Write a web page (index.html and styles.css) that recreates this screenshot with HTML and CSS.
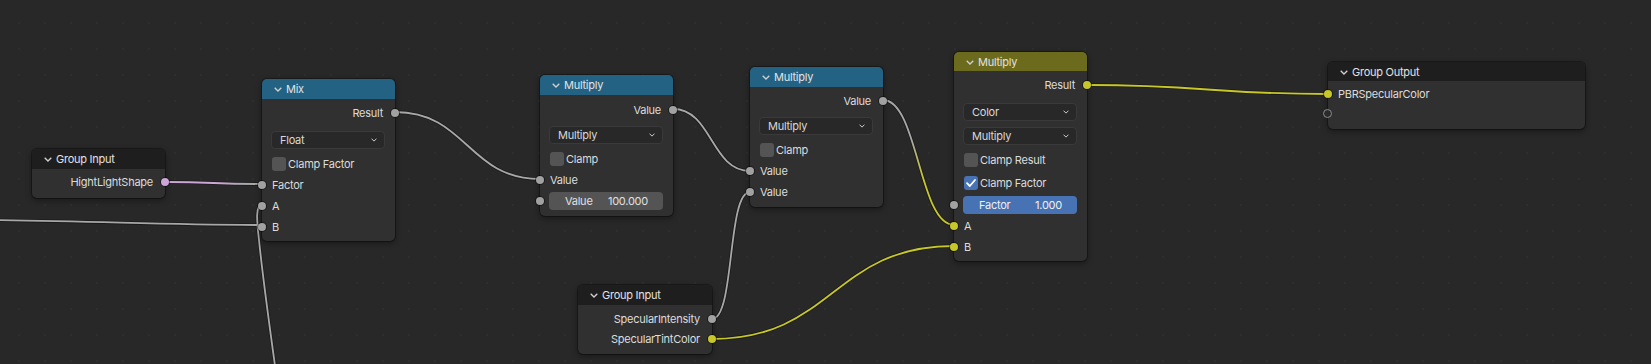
FILE: index.html
```html
<!DOCTYPE html>
<html lang="en">
<head>
    <meta charset="UTF-8">
    <meta name="viewport" content="width=device-width, initial-scale=1.0">
    <title>Node Editor</title>
    <link rel="stylesheet" href="styles.css">
</head>
<body>
    <div class="canvas">
        <svg class="wires" width="1651" height="364" viewBox="0 0 1651 364">
            <defs>
                <linearGradient id="pinkGray" gradientUnits="userSpaceOnUse" x1="165" y1="0" x2="262" y2="0">
                    <stop offset="0.55" stop-color="#cca6d6"/>
                    <stop offset="0.85" stop-color="#a8a8a8"/>
                </linearGradient>
                <linearGradient id="grayYellow" gradientUnits="userSpaceOnUse" x1="0" y1="100" x2="0" y2="225">
                    <stop offset="0.3" stop-color="#a8a8a8"/>
                    <stop offset="0.65" stop-color="#c7c729"/>
                </linearGradient>
            </defs>
            <g class="shade">
                <path d="M -20 220 C 100 221, 160 225, 262 225"/>
                <path d="M 262 205 C 255 205, 257 222, 259 240 C 262 270, 270 330, 277 380"/>
                <path d="M 165 182 C 215 182, 212 184, 262 184"/>
                <path d="M 395 112 C 467 112, 468 179, 540 179"/>
                <path d="M 673 109 C 712 109, 711 171, 750 171"/>
                <path d="M 712 319 C 735 319, 727 192, 750 192"/>
                <path d="M 883 100 C 918 100, 919 225, 954 225"/>
                <path d="M 712 339 C 833 339, 833 246, 954 246"/>
                <path d="M 1087 85 C 1207 85, 1208 94, 1328 94"/>
            </g>
            <g class="wire">
                <path class="gray" d="M -20 220 C 100 221, 160 225, 262 225"/>
                <path class="gray" d="M 262 205 C 255 205, 257 222, 259 240 C 262 270, 270 330, 277 380"/>
                <path stroke="url(#pinkGray)" d="M 165 182 C 215 182, 212 184, 262 184"/>
                <path class="gray" d="M 395 112 C 467 112, 468 179, 540 179"/>
                <path class="gray" d="M 673 109 C 712 109, 711 171, 750 171"/>
                <path class="gray" d="M 712 319 C 735 319, 727 192, 750 192"/>
                <path stroke="url(#grayYellow)" d="M 883 100 C 918 100, 919 225, 954 225"/>
                <path class="yellow" d="M 712 339 C 833 339, 833 246, 954 246"/>
                <path class="yellow" d="M 1087 85 C 1207 85, 1208 94, 1328 94"/>
            </g>
        </svg>

        <!-- Group Input (left) -->
        <div class="node io n-gin1">
            <div class="head dark">
                <svg class="chev" viewBox="0 0 8 5"><polyline points="0.7,0.7 4,4 7.3,0.7"/></svg>
                <span>Group Input</span>
            </div>
            <div class="body">
                <div class="row out">HightLightShape<i class="sock r pink"></i></div>
            </div>
        </div>

        <!-- Mix -->
        <div class="node n-mix">
            <div class="head blue">
                <svg class="chev" viewBox="0 0 8 5"><polyline points="0.7,0.7 4,4 7.3,0.7"/></svg>
                <span>Mix</span>
            </div>
            <div class="body">
                <div class="row out">Result<i class="sock r gray"></i></div>
                <div class="select mt8">Float<svg class="dd" viewBox="0 0 8 5"><polyline points="0.7,0.7 4,4 7.3,0.7"/></svg></div>
                <div class="row mt4"><span class="check"></span>Clamp Factor</div>
                <div class="row">Factor<i class="sock l gray"></i></div>
                <div class="row">A<i class="sock l gray"></i></div>
                <div class="row">B<i class="sock l gray"></i></div>
            </div>
        </div>

        <!-- Multiply (math 1) -->
        <div class="node n-mul1">
            <div class="head blue">
                <svg class="chev" viewBox="0 0 8 5"><polyline points="0.7,0.7 4,4 7.3,0.7"/></svg>
                <span>Multiply</span>
            </div>
            <div class="body">
                <div class="row out">Value<i class="sock r gray"></i></div>
                <div class="select mt6">Multiply<svg class="dd" viewBox="0 0 8 5"><polyline points="0.7,0.7 4,4 7.3,0.7"/></svg></div>
                <div class="row mt4"><span class="check"></span>Clamp</div>
                <div class="row">Value<i class="sock l gray"></i></div>
                <div class="row">
                    <div class="num"><span>Value</span><span>100.000</span></div>
                    <i class="sock l gray"></i>
                </div>
            </div>
        </div>

        <!-- Multiply (math 2) -->
        <div class="node n-mul2">
            <div class="head blue">
                <svg class="chev" viewBox="0 0 8 5"><polyline points="0.7,0.7 4,4 7.3,0.7"/></svg>
                <span>Multiply</span>
            </div>
            <div class="body">
                <div class="row out">Value<i class="sock r gray"></i></div>
                <div class="select mt6">Multiply<svg class="dd" viewBox="0 0 8 5"><polyline points="0.7,0.7 4,4 7.3,0.7"/></svg></div>
                <div class="row mt4"><span class="check"></span>Clamp</div>
                <div class="row">Value<i class="sock l gray"></i></div>
                <div class="row">Value<i class="sock l gray"></i></div>
            </div>
        </div>

        <!-- Multiply (mix color) -->
        <div class="node n-mul3">
            <div class="head olive">
                <svg class="chev" viewBox="0 0 8 5"><polyline points="0.7,0.7 4,4 7.3,0.7"/></svg>
                <span>Multiply</span>
            </div>
            <div class="body">
                <div class="row out">Result<i class="sock r yellow"></i></div>
                <div class="select mt8">Color<svg class="dd" viewBox="0 0 8 5"><polyline points="0.7,0.7 4,4 7.3,0.7"/></svg></div>
                <div class="select mt6">Multiply<svg class="dd" viewBox="0 0 8 5"><polyline points="0.7,0.7 4,4 7.3,0.7"/></svg></div>
                <div class="row mt4"><span class="check"></span>Clamp Result</div>
                <div class="row mt2"><span class="check on"><svg viewBox="0 0 14 14"><polyline points="3,7.2 5.8,10 11,4"/></svg></span>Clamp Factor</div>
                <div class="row mt1">
                    <div class="num blue-field"><span>Factor</span><span>1.000</span></div>
                    <i class="sock l gray"></i>
                </div>
                <div class="row">A<i class="sock l yellow"></i></div>
                <div class="row">B<i class="sock l yellow"></i></div>
            </div>
        </div>

        <!-- Group Output -->
        <div class="node io n-gout">
            <div class="head dark">
                <svg class="chev" viewBox="0 0 8 5"><polyline points="0.7,0.7 4,4 7.3,0.7"/></svg>
                <span>Group Output</span>
            </div>
            <div class="body">
                <div class="row">PBRSpecularColor<i class="sock l yellow"></i></div>
                <div class="row"><i class="sock l empty"></i></div>
            </div>
        </div>

        <!-- Group Input (bottom) -->
        <div class="node io n-gin2">
            <div class="head dark">
                <svg class="chev" viewBox="0 0 8 5"><polyline points="0.7,0.7 4,4 7.3,0.7"/></svg>
                <span>Group Input</span>
            </div>
            <div class="body">
                <div class="row out">SpecularIntensity<i class="sock r gray"></i></div>
                <div class="row out">SpecularTintColor<i class="sock r yellow"></i></div>
            </div>
        </div>
    </div>
</body>
</html>
```

FILE: styles.css
```css
body {
    margin: 0;
    background: #282828;
    font-family: Inter, "Noto Sans", sans-serif;
    font-size: 11px;
    letter-spacing: -0.25px;
    color: #dcdcdc;
    overflow: hidden;
}
.canvas {
    position: relative;
    width: 1651px;
    height: 364px;
    overflow: hidden;
    background-color: #282828;
    background-image: radial-gradient(circle, #2e2e2e 0.9px, transparent 1.3px);
    background-size: 26px 26px;
    background-position: 6px 10px;
}
.wires {
    position: absolute;
    left: 0;
    top: 0;
}
.wires path {
    fill: none;
}
.shade path {
    stroke: rgba(0, 0, 0, 0.35);
    stroke-width: 3.5;
}
.wire path {
    stroke-width: 1.8;
}
.wire .gray {
    stroke: #a8a8a8;
}
.wire .yellow {
    stroke: #c7c729;
}

/* nodes */
.node {
    position: absolute;
    width: 133px;
    background: #303030;
    border-radius: 5px;
    box-shadow: 0 0 0 1px rgba(0, 0, 0, 0.3), 0 2px 6px rgba(0, 0, 0, 0.45);
}
.n-gin1 { left: 32px; top: 149px; }
.n-mix { left: 262px; top: 79px; }
.n-mul1 { left: 540px; top: 75px; }
.n-mul2 { left: 750px; top: 67px; }
.n-mul3 { left: 954px; top: 52px; }
.n-gout { left: 1328px; top: 62px; width: 257px; }
.n-gin2 { left: 578px; top: 285px; width: 134px; }

.head {
    height: 20px;
    display: flex;
    align-items: center;
    padding-left: 12px;
    border-radius: 5px 5px 0 0;
    color: #e2e2e2;
}
.n-mul3 .head,
.n-gout .head {
    height: 19px;
}
.head.dark { background: #1e1e1e; }
.head.blue { background: #246283; }
.head.olive { background: #6b6a1d; }
.chev {
    width: 8px;
    height: 5px;
    margin-right: 4px;
    margin-top: 1px;
}
.chev polyline,
.dd polyline {
    fill: none;
    stroke: #d0d0d0;
    stroke-width: 1.3;
}

.body {
    padding: 3px 0 4px;
}
.n-mul1 .body { padding: 4px 0 5px; }
.n-mul2 .body { padding: 3px 0 5px; }
.n-gin1 .body { padding: 3px 0 6px; }
.n-gin2 .body { padding: 4px 0 5px; }
.n-gout .body { padding: 3px 0 5px; }

.row {
    position: relative;
    height: 21px;
    display: flex;
    align-items: center;
    padding: 0 10px;
}
.io .row {
    height: 20px;
}
.row.out {
    justify-content: flex-end;
    padding-right: 12px;
}
.mt1 { margin-top: 1px; }
.mt2 { margin-top: 2px; }
.mt4 { margin-top: 4px; }
.mt6 { margin-top: 6px; }
.mt8 { margin-top: 8px; }

.sock {
    position: absolute;
    top: 50%;
    width: 8px;
    height: 8px;
    margin-top: -4px;
    border-radius: 50%;
    box-shadow: 0 0 0 1px rgba(0, 0, 0, 0.45);
}
.sock.l { left: -4px; }
.sock.r { right: -4px; }
.sock.gray { background: #a1a1a1; }
.sock.yellow { background: #c7c729; }
.sock.pink { background: #cca6d6; }
.sock.empty {
    left: -5px;
    width: 7px;
    height: 7px;
    margin-top: -5px;
    background: #2a2a2a;
    border: 1px solid #8c8c8c;
    box-shadow: none;
}

.select {
    height: 16px;
    margin-left: 9px;
    margin-right: 10px;
    padding: 0 7px 0 8px;
    display: flex;
    align-items: center;
    justify-content: space-between;
    background: #282828;
    border: 1px solid #3a3a3a;
    border-radius: 4px;
    color: #d8d8d8;
}
.dd {
    width: 6px;
    height: 4px;
}

.check {
    width: 14px;
    height: 14px;
    margin-right: 2px;
    border-radius: 3px;
    background: #545454;
    display: inline-flex;
}
.check.on {
    background: #4772b3;
}
.check svg {
    width: 14px;
    height: 14px;
}
.check polyline {
    fill: none;
    stroke: #ffffff;
    stroke-width: 1.8;
    stroke-linecap: round;
    stroke-linejoin: round;
}

.num {
    flex: 1;
    height: 18px;
    margin-left: -1px;
    padding: 0 15px 0 16px;
    display: flex;
    align-items: center;
    justify-content: space-between;
    background: #545454;
    border-radius: 4px;
    color: #e0e0e0;
}
.num.blue-field {
    background: #4772b3;
    color: #f0f0f0;
}
```
